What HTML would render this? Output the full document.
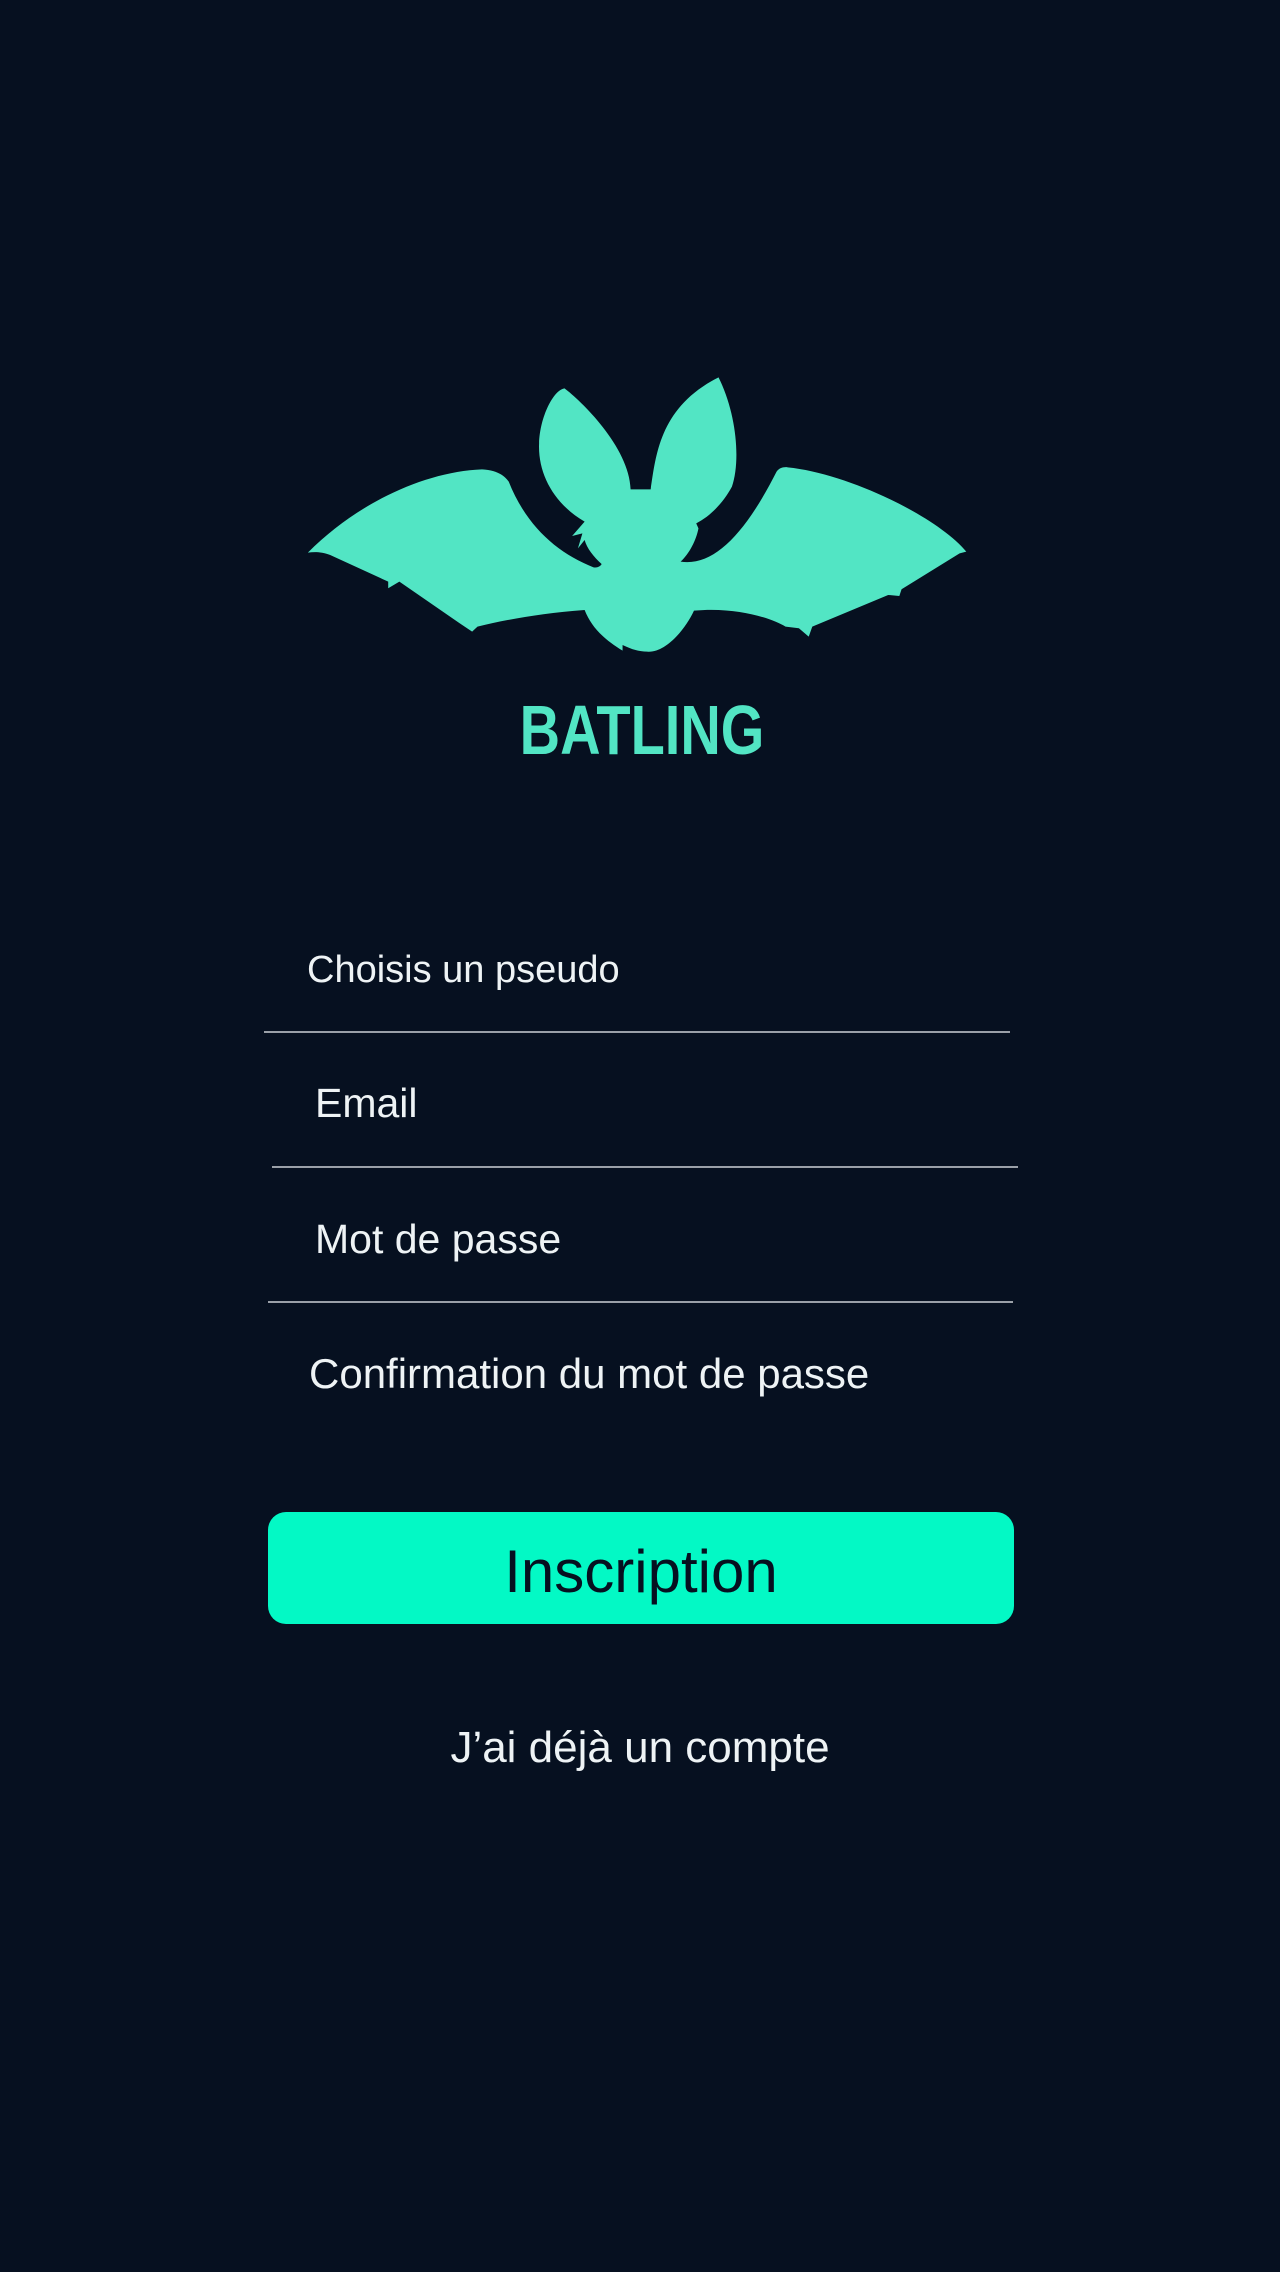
<!DOCTYPE html>
<html><head><meta charset="utf-8"><style>
html,body{margin:0;padding:0;}
body{width:1280px;height:2272px;background:#061020;position:relative;overflow:hidden;font-family:"Liberation Sans",sans-serif;color:#eef3f5;}
.t{position:absolute;white-space:nowrap;line-height:1;}
.l{position:absolute;height:2px;background:#9aa0a8;}
</style></head><body>
<svg style="position:absolute;left:0;top:0" width="1280" height="900">
<g transform="translate(290,360) scale(0.4464,0.3333)">
<path fill="#52e5c4" d="M40,578 C150,430 300,335 430,328 C470,330 485,355 490,365 C530,500 600,580 680,622 C690,625 698,615 698,612 C680,590 665,565 660,540 L645,565 L655,520 L632,528 L660,485 C590,430 555,340 558,250 C560,170 590,90 615,85 C650,120 760,260 763,388 L808,388 C820,280 830,140 960,52 C1000,160 1010,300 990,380 C970,430 940,470 910,490 L915,505 C910,540 895,580 875,605 C950,620 1020,520 1090,335 C1095,325 1105,320 1115,322 C1250,340 1450,470 1515,575 L1500,580 L1370,688 L1365,708 L1340,705 L1170,800 L1162,830 L1140,805 L1110,800 C1080,775 1000,740 905,752 C885,810 840,880 800,875 C780,875 760,865 745,855 L745,872 C700,835 675,800 660,750 C560,760 480,780 420,800 L408,815 L380,790 L245,665 L220,685 L220,665 L90,585 C70,575 55,575 40,578 Z"/>
</g>
</svg>
<div class="t" style="left:0;width:1284px;text-align:center;top:695px;font-size:70px;font-weight:bold;color:#52e5c4;transform:scaleX(0.8);">BATLING</div>

<div class="t" style="left:307px;top:951px;font-size:38px;">Choisis un pseudo</div>
<div class="l" style="left:264px;width:746px;top:1031px;"></div>
<div class="t" style="left:315px;top:1083px;font-size:41px;">Email</div>
<div class="l" style="left:272px;width:746px;top:1166px;"></div>
<div class="t" style="left:315px;top:1219px;font-size:41px;">Mot de passe</div>
<div class="l" style="left:268px;width:745px;top:1301px;"></div>
<div class="t" style="left:309px;top:1353px;font-size:42px;">Confirmation du mot de passe</div>

<div style="position:absolute;left:268px;top:1512px;width:746px;height:112px;border-radius:18px;background:#03f9c5;"></div>
<div class="t" style="left:268px;width:746px;text-align:center;top:1542px;font-size:60px;color:#061020;">Inscription</div>

<div class="t" style="left:0;width:1280px;text-align:center;top:1726px;font-size:44px;">J’ai déjà un compte</div>
</body></html>
